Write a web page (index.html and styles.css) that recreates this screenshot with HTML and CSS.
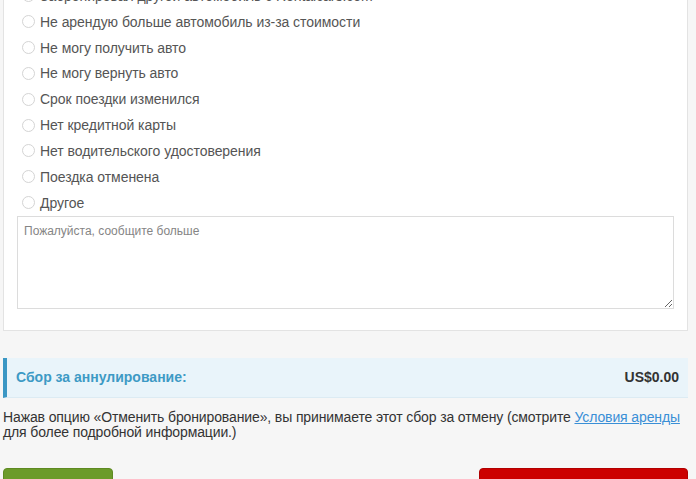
FILE: index.html
```html
<!DOCTYPE html>
<html lang="ru">
<head>
  <meta charset="UTF-8">
  <meta name="viewport" content="width=device-width, initial-scale=1.0">
  <title>Отмена бронирования</title>
  <link rel="stylesheet" href="styles.css">
</head>
<body>
  <div class="page">
    <div class="reasons">
      <label class="reason"><span class="radio"></span>Забронировал другой автомобиль с Rentalcars.com</label>
      <label class="reason"><span class="radio"></span>Не арендую больше автомобиль из-за стоимости</label>
      <label class="reason"><span class="radio"></span>Не могу получить авто</label>
      <label class="reason"><span class="radio"></span>Не могу вернуть авто</label>
      <label class="reason"><span class="radio"></span>Срок поездки изменился</label>
      <label class="reason"><span class="radio"></span>Нет кредитной карты</label>
      <label class="reason"><span class="radio"></span>Нет водительского удостоверения</label>
      <label class="reason"><span class="radio"></span>Поездка отменена</label>
      <label class="reason"><span class="radio"></span>Другое</label>
      <textarea class="comment" placeholder="Пожалуйста, сообщите больше"></textarea>
    </div>

    <div class="fee">
      <span class="fee-label">Сбор за аннулирование:</span>
      <span class="fee-value">US$0.00</span>
    </div>

    <p class="terms">Нажав опцию «Отменить бронирование», вы принимаете этот сбор за отмену (смотрите <a href="#">Условия аренды</a> для более подробной информации.)</p>

    <div class="actions">
      <button class="btn btn-back">Назад</button>
      <button class="btn btn-cancel">Отменить бронирование</button>
    </div>
  </div>
</body>
</html>
```

FILE: styles.css
```css
body {
  margin: 0;
  background: #f6f6f6;
  font-family: 'Liberation Sans', Arial, sans-serif;
  font-size: 14px;
  color: #333;
  overflow: hidden;
}

.page {
  width: 685px;
  padding-left: 3px;
  margin-top: -18px;
}

.reasons {
  background: #fff;
  border: 1px solid #e3e3e3;
  padding: 0 13px 21px;
  display: flex;
  flex-direction: column;
}

.reason {
  display: flex;
  align-items: center;
  height: 25.85px;
  padding-left: 5px;
  color: #555;
  letter-spacing: -0.05px;
}

.radio {
  width: 11px;
  height: 11px;
  border: 1px solid #d4d4d4;
  border-radius: 50%;
  margin-right: 5px;
  background: #fff;
}

.comment {
  display: block;
  height: 93px;
  box-sizing: border-box;
  border: 1px solid #dcdcdc;
  padding: 7px 6px;
  font-family: 'Liberation Sans', Arial, sans-serif;
  font-size: 12px;
  resize: vertical;
}

.comment::placeholder {
  color: #858585;
}

.fee {
  margin-top: 27px;
  height: 40px;
  box-sizing: border-box;
  display: flex;
  align-items: center;
  justify-content: space-between;
  background: #e9f4fa;
  border-left: 4px solid #3b97c4;
  border-bottom: 1px solid #dcebf3;
  padding: 0 9px;
  font-weight: bold;
}

.fee-label {
  color: #3d9ac5;
}

.fee-value {
  color: #333;
}

.terms {
  margin: 12px 0 0;
  line-height: 15px;
  letter-spacing: -0.12px;
}

.terms a {
  color: #3a8fd6;
}

.actions {
  display: flex;
  justify-content: space-between;
  margin-top: 28px;
}

.btn {
  height: 44px;
  border-radius: 4px;
  color: #fff;
  font-family: 'Liberation Sans', Arial, sans-serif;
  font-size: 14px;
  font-weight: bold;
  cursor: pointer;
}

.btn-back {
  width: 110px;
  background: #6c9b2a;
  border: 1px solid #5e8a22;
}

.btn-cancel {
  width: 209px;
  background: #cc0000;
  border: 1px solid #b00000;
}
```
